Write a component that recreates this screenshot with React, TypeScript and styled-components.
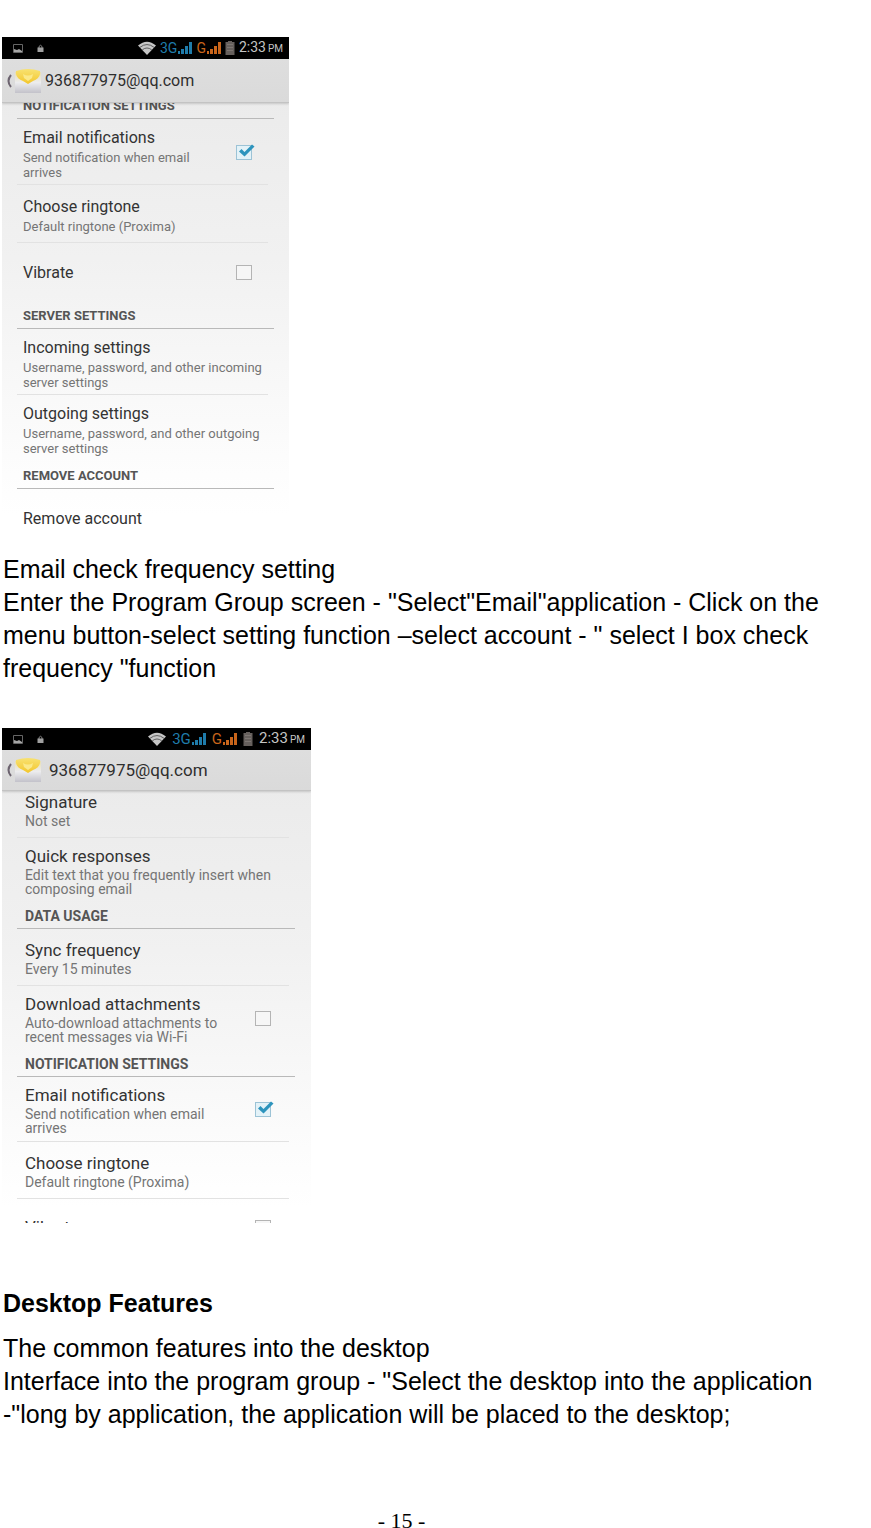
import React from "react";
import styled, { createGlobalStyle, ThemeProvider } from "styled-components";

interface Metrics {
  width: number;
  height: number;
  barHeight: number;
  headerHeight: number;
  inset: number;
  textInset: number;
  endInset: number;
  checkInset: number;
  account: number;
  accountGap: number;
  clock: number;
  title: number;
  note: number;
  noteLine: number;
  category: number;
  categoryHeight: number;
  single: number;
  double: number;
  rowTop: number;
  scrolled: number;
  statusGap: number;
}

const narrow: Metrics = {
  width: 287, height: 492, barHeight: 22, headerHeight: 44,
  inset: 15, textInset: 6, endInset: 15, checkInset: 16,
  account: 16, accountGap: 4, clock: 14, title: 16, note: 13, noteLine: 15, category: 13,
  categoryHeight: 28, single: 58, double: 66, rowTop: 2, scrolled: 12, statusGap: 4,
};

const wide: Metrics = {
  width: 309, height: 495, barHeight: 22, headerHeight: 41,
  inset: 15, textInset: 8, endInset: 16, checkInset: 18,
  account: 17, accountGap: 8, clock: 15, title: 17, note: 14, noteLine: 14, category: 14,
  categoryHeight: 26, single: 57, double: 65, rowTop: 0, scrolled: 10, statusGap: 6,
};

const m = (key: keyof Metrics) => ({ theme }: { theme: any }) => `${theme[key]}px`;

const GlobalStyle = createGlobalStyle`
  *, *::before, *::after { box-sizing: border-box; }
  body {
    margin: 0;
    background: #fff;
    color: #000;
    font-family: "Liberation Sans", Arial, sans-serif;
  }
`;

const Page = styled.main`
  display: flex;
  flex-direction: column;
  padding: 37px 0 0 2px;
`;

const Prose = styled.section<{ $top: number }>`
  margin-top: ${(p) => p.$top}px;
  padding: 0 48px 0 1px;
  font-size: 25px;
  line-height: 33px;
`;

const Paragraph = styled.p`
  margin: 0;
`;

const Heading = styled.h2`
  margin: 0 0 12px;
  font-size: 25px;
  line-height: 33px;
  font-weight: 700;
`;

const PageNumber = styled.footer`
  margin-top: 82px;
  padding-right: 70px;
  text-align: center;
  font-family: "Liberation Serif", "Times New Roman", serif;
  font-size: 22px;
  line-height: 15px;
`;

const Screen = styled.section<{ $top?: number }>`
  display: flex;
  flex-direction: column;
  width: ${m("width")};
  max-width: 100%;
  height: ${m("height")};
  margin-top: ${(p) => p.$top ?? 0}px;
  overflow: hidden;
  background: linear-gradient(#e9e9e9, #f1f1f1 45%, #fcfcfc 85%, #fff 97%);
  font-family: Roboto, sans-serif;
  color: #333;
`;

const StatusBar = styled.div`
  display: flex;
  flex: none;
  align-items: center;
  gap: ${m("statusGap")};
  height: ${m("barHeight")};
  padding: 0 6px 0 11px;
  background: #000;
  font-size: ${m("clock")};
  line-height: 20px;
  color: #c4c4c4;
`;

const Notices = styled.div`
  display: flex;
  align-items: center;
  gap: 14px;
  margin-right: auto;
`;

const Network = styled.span<{ $color: string }>`
  display: flex;
  align-items: center;
  gap: 1px;
  color: ${(p) => p.$color};
`;

const Clock = styled.span`
  display: flex;
  align-items: baseline;
  gap: 2px;
`;

const Meridiem = styled.span`
  font-size: 10px;
`;

const Header = styled.header`
  position: relative;
  display: flex;
  flex: none;
  align-items: center;
  height: ${m("headerHeight")};
  padding-left: 3px;
  background: linear-gradient(#dedede, #dadada);
  border-bottom: 1px solid #c3c3c3;
  box-shadow: 0 1px 2px rgba(0, 0, 0, 0.16);
`;

const BackButton = styled.button`
  display: flex;
  align-items: center;
  padding: 0;
  border: 0;
  background: none;
`;

const Account = styled.h3`
  margin: 0 0 0 ${m("accountGap")};
  font-size: ${m("account")};
  line-height: 24px;
  font-weight: 400;
  color: #2e2e2e;
`;

const List = styled.div`
  display: flex;
  flex: none;
  flex-direction: column;
  margin-top: -${m("scrolled")};
  padding: 0 ${m("endInset")} 0 ${m("inset")};
`;

const Category = styled.h4`
  display: flex;
  align-items: flex-end;
  height: ${m("categoryHeight")};
  margin: 0;
  padding: 0 0 4px ${m("textInset")};
  border-bottom: 1px solid #b9b9b9;
  font-size: ${m("category")};
  line-height: 16px;
  font-weight: 700;
  color: #555;
`;

const Row = styled.label<{ $double: boolean; $last: boolean }>`
  display: flex;
  align-items: center;
  justify-content: space-between;
  min-height: ${({ theme, $double }: any) => ($double ? theme.double : theme.single)}px;
  margin-right: 6px;
  padding: ${m("rowTop")} 0 0 ${m("textInset")};
  border-bottom: 1px solid ${(p) => (p.$last ? "transparent" : "#e2e2e2")};
`;

const RowText = styled.span`
  display: flex;
  flex-direction: column;
`;

const Title = styled.span`
  font-size: ${m("title")};
  line-height: 24px;
`;

const Note = styled.span`
  font-size: ${m("note")};
  line-height: ${m("noteLine")};
  color: #757575;
  white-space: pre;
`;

const CheckHolder = styled.span`
  position: relative;
  display: flex;
  flex: none;
  margin-right: ${m("checkInset")};
`;

const CheckBox = styled.input`
  appearance: none;
  width: 16px;
  height: 15px;
  margin: 0;
  border: 1px solid #b4b4b4;
  background: #f6f6f6;

  &:checked {
    border-color: #9cc3d6;
    background: #e3f2f8;
  }
`;

const Tick = styled.svg`
  position: absolute;
  left: 0;
  top: -2px;
  pointer-events: none;
`;

const WifiIcon = () => (
  <svg width="18" height="14" viewBox="0 0 18 14" aria-hidden="true">
    <path d="M0 4.6Q9-3 18 4.600L9 14Z" fill="#c6c6c6" />
    <path d="M2 6.300Q9 .8 16 6.300M4.300 8.800Q9 5.200 13.700 8.800" fill="none" stroke="#444" strokeWidth=".8" />
  </svg>
);

const SignalIcon = () => (
  <svg width="14" height="12" viewBox="0 0 14 12" fill="currentColor" aria-hidden="true">
    <path d="M0 9h2v3H0zM3 7h3v5H3zM7 4h3v8H7zM11 0h3v12h-3z" />
  </svg>
);

const BatteryIcon = () => (
  <svg width="10" height="14" viewBox="0 0 10 14" aria-hidden="true">
    <path d="M3 0h4v1h2.500v13H.5V1H3z" fill="#66605d" />
    <path d="M2 3.500h6M2 6.500h6M2 9.500h6" stroke="#7d7672" />
  </svg>
);

const PictureIcon = () => (
  <svg width="10" height="9" viewBox="0 0 10 9" aria-hidden="true">
    <path d="M.5.5h9v8h-9z" fill="none" stroke="#666" />
    <path d="M1 8V5l3 1 2-1 3 2v1z" fill="#a5a5a5" />
  </svg>
);

const LockIcon = () => (
  <svg width="7" height="9" viewBox="0 0 7 9" aria-hidden="true">
    <path d="M2 4V2.500Q3.500 0 5 2.500V4" fill="none" stroke="#888" />
    <path d="M.5 3.500h6V8h-6z" fill="#a0a0a0" />
  </svg>
);

const MailIcon = () => (
  <svg width="26" height="26" viewBox="0 0 26 26" aria-hidden="true">
    <defs>
      <linearGradient id="mail-paper" x2="0" y2="1">
        <stop offset="0" stopColor="#e9dfb0" />
        <stop offset=".5" stopColor="#ececee" />
        <stop offset="1" stopColor="#c3c2ca" />
      </linearGradient>
      <linearGradient id="mail-flap" x2="0" y2="1">
        <stop offset="0" stopColor="#f8e272" />
        <stop offset="1" stopColor="#f3c62c" />
      </linearGradient>
    </defs>
    <path d="M0 4h26v21H0z" fill="url(#mail-paper)" />
    <path d="M1 3Q13-1 25 3v3q-1 5-7 7l-5 3-5-3Q2 11 1 6Z" fill="url(#mail-flap)" />
    <path d="M8 6q5 3 10 0l-1 4-4 3-4-3z" fill="#fbe98a" />
  </svg>
);

interface Setting {
  title: string;
  note?: string;
  checked?: boolean;
  last?: boolean;
}

const SettingRow = ({ title, note, checked, last = false }: Setting) => (
  <Row as={checked === undefined ? "div" : "label"} $double={!!note && note.includes("\n")} $last={last}>
    <RowText>
      <Title>{title}</Title>
      {note && <Note>{note}</Note>}
    </RowText>
    {checked !== undefined && (
      <CheckHolder>
        <CheckBox type="checkbox" defaultChecked={checked} />
        {checked && (
          <Tick width="20" height="16" viewBox="0 0 20 16" aria-hidden="true">
            <path d="M3 8.500 5.500 6 8.500 9 16 1.500 18.500 3.500 8.500 13.500Z" fill="#2d94bd" />
          </Tick>
        )}
      </CheckHolder>
    )}
  </Row>
);

const PhoneScreen = ({ metrics, top, children }: { metrics: Metrics; top?: number; children: React.ReactNode }) => (
  <ThemeProvider theme={metrics}>
    <Screen $top={top}>
      <StatusBar>
        <Notices>
          <PictureIcon />
          <LockIcon />
        </Notices>
        <WifiIcon />
        <Network $color="#1f7cab">3G <SignalIcon /></Network>
        <Network $color="#c9651b">G <SignalIcon /></Network>
        <BatteryIcon />
        <Clock>2:33 <Meridiem>PM</Meridiem></Clock>
      </StatusBar>
      <Header>
        <BackButton type="button" aria-label="Back">
          <svg width="10" height="14" viewBox="0 0 10 14" aria-hidden="true">
            <path d="M6 1Q1 7 6 13" fill="none" stroke="#6d6470" strokeWidth="2" />
          </svg>
          <MailIcon />
        </BackButton>
        <Account>936877975@qq.com</Account>
      </Header>
      <List>{children}</List>
    </Screen>
  </ThemeProvider>
);

export default function App() {
  return (
    <>
      <GlobalStyle />
      <Page>
        <PhoneScreen metrics={narrow}>
          <Category>NOTIFICATION SETTINGS</Category>
          <SettingRow title="Email notifications" note={"Send notification when email\narrives"} checked />
          <SettingRow title="Choose ringtone" note="Default ringtone (Proxima)" />
          <SettingRow title="Vibrate" checked={false} last />
          <Category>SERVER SETTINGS</Category>
          <SettingRow title="Incoming settings" note={"Username, password, and other incoming\nserver settings"} />
          <SettingRow title="Outgoing settings" note={"Username, password, and other outgoing\nserver settings"} last />
          <Category>REMOVE ACCOUNT</Category>
          <SettingRow title="Remove account" last />
        </PhoneScreen>
        <Prose $top={24}>
          <Paragraph>Email check frequency setting</Paragraph>
          <Paragraph>
            Enter the Program Group screen - "Select"Email"application - Click on the menu button-select
            setting function –select account - " select I box check frequency "function
          </Paragraph>
        </Prose>
        <PhoneScreen metrics={wide} top={43}>
          <SettingRow title="Signature" note="Not set" />
          <SettingRow title="Quick responses" note={"Edit text that you frequently insert when\ncomposing email"} last />
          <Category>DATA USAGE</Category>
          <SettingRow title="Sync frequency" note="Every 15 minutes" />
          <SettingRow title="Download attachments" note={"Auto-download attachments to\nrecent messages via Wi-Fi"} checked={false} last />
          <Category>NOTIFICATION SETTINGS</Category>
          <SettingRow title="Email notifications" note={"Send notification when email\narrives"} checked />
          <SettingRow title="Choose ringtone" note="Default ringtone (Proxima)" />
          <SettingRow title="Vibrate" checked={false} last />
        </PhoneScreen>
        <Prose $top={64}>
          <Heading>Desktop Features</Heading>
          <Paragraph>The common features into the desktop</Paragraph>
          <Paragraph>
            Interface into the program group - "Select the desktop into the application -"long by
            application, the application will be placed to the desktop;
          </Paragraph>
        </Prose>
        <PageNumber>- 15 -</PageNumber>
      </Page>
    </>
  );
}
